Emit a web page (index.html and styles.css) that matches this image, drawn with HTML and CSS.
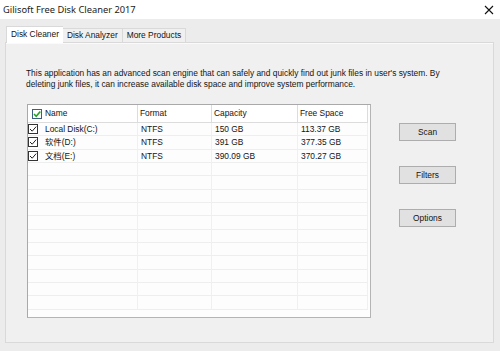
FILE: index.html
```html
<!DOCTYPE html>
<html lang="en">
<head>
    <meta charset="UTF-8">
    <title>Gilisoft Free Disk Cleaner 2017</title>
    <link rel="stylesheet" href="styles.css">
</head>
<body>
    <div class="titlebar">
        <span class="title">Gilisoft Free Disk Cleaner 2017</span>
        <svg class="close" width="10" height="10" viewBox="0 0 10 10">
            <path d="M1 1L9 9M9 1L1 9" stroke="#111" stroke-width="1.1" fill="none"/>
        </svg>
    </div>
    <div class="client">
        <div class="tabs">
            <div class="tab active">Disk Cleaner</div>
            <div class="tab">Disk Analyzer</div>
            <div class="tab">More Products</div>
        </div>
        <div class="panel">
            <p class="intro">This application has an advanced scan engine that can safely and quickly find out junk files in user's system. By deleting junk files, it can increase available disk space and improve system performance.</p>
            <div class="main">
                <div class="list">
                    <div class="list-head">
                        <div class="cell name-cell">
                            <svg class="check head-check" width="10" height="10" viewBox="0 0 10 10">
                                <rect x="0.5" y="0.5" width="9" height="9" fill="#fff" stroke="#3c5f80"/>
                                <path d="M2 5L4.2 7.2L8.3 2.4" stroke="#23a323" stroke-width="1.6" fill="none"/>
                            </svg>
                            Name
                        </div>
                        <div class="cell">Format</div>
                        <div class="cell">Capacity</div>
                        <div class="cell">Free Space</div>
                    </div>
                    <div class="list-body">
                        <div class="row">
                            <div class="cell name-cell">
                                <svg class="check" width="10" height="10" viewBox="0 0 10 10">
                                    <rect x="0.5" y="0.5" width="9" height="9" fill="#fff" stroke="#333"/>
                                    <path d="M2 5L4.2 7.2L8.2 2.6" stroke="#222" stroke-width="1" fill="none"/>
                                </svg>
                                Local Disk(C:)
                            </div>
                            <div class="cell">NTFS</div>
                            <div class="cell">150 GB</div>
                            <div class="cell">113.37 GB</div>
                        </div>
                        <div class="row">
                            <div class="cell name-cell">
                                <svg class="check" width="10" height="10" viewBox="0 0 10 10">
                                    <rect x="0.5" y="0.5" width="9" height="9" fill="#fff" stroke="#333"/>
                                    <path d="M2 5L4.2 7.2L8.2 2.6" stroke="#222" stroke-width="1" fill="none"/>
                                </svg>
                                软件(D:)
                            </div>
                            <div class="cell">NTFS</div>
                            <div class="cell">391 GB</div>
                            <div class="cell">377.35 GB</div>
                        </div>
                        <div class="row">
                            <div class="cell name-cell">
                                <svg class="check" width="10" height="10" viewBox="0 0 10 10">
                                    <rect x="0.5" y="0.5" width="9" height="9" fill="#fff" stroke="#333"/>
                                    <path d="M2 5L4.2 7.2L8.2 2.6" stroke="#222" stroke-width="1" fill="none"/>
                                </svg>
                                文档(E:)
                            </div>
                            <div class="cell">NTFS</div>
                            <div class="cell">390.09 GB</div>
                            <div class="cell">370.27 GB</div>
                        </div>
                        <div class="row"><div class="cell"></div><div class="cell"></div><div class="cell"></div><div class="cell"></div></div>
                        <div class="row"><div class="cell"></div><div class="cell"></div><div class="cell"></div><div class="cell"></div></div>
                        <div class="row"><div class="cell"></div><div class="cell"></div><div class="cell"></div><div class="cell"></div></div>
                        <div class="row"><div class="cell"></div><div class="cell"></div><div class="cell"></div><div class="cell"></div></div>
                        <div class="row"><div class="cell"></div><div class="cell"></div><div class="cell"></div><div class="cell"></div></div>
                        <div class="row"><div class="cell"></div><div class="cell"></div><div class="cell"></div><div class="cell"></div></div>
                        <div class="row"><div class="cell"></div><div class="cell"></div><div class="cell"></div><div class="cell"></div></div>
                        <div class="row"><div class="cell"></div><div class="cell"></div><div class="cell"></div><div class="cell"></div></div>
                        <div class="row"><div class="cell"></div><div class="cell"></div><div class="cell"></div><div class="cell"></div></div>
                        <div class="row"><div class="cell"></div><div class="cell"></div><div class="cell"></div><div class="cell"></div></div>
                        <div class="row"><div class="cell"></div><div class="cell"></div><div class="cell"></div><div class="cell"></div></div>
                    </div>
                </div>
                <div class="actions">
                    <button class="btn">Scan</button>
                    <button class="btn">Filters</button>
                    <button class="btn">Options</button>
                </div>
            </div>
        </div>
    </div>
</body>
</html>
```

FILE: styles.css
```css
*{
    margin: 0;
    padding: 0;
    box-sizing: border-box;
}
body{
    width: 500px;
    height: 351px;
    overflow: hidden;
    background: #ececec;
    font-family: "Liberation Sans", Arial, "Noto Sans CJK SC", sans-serif;
    font-size: 8.4px;
    color: #141414;
}
.titlebar{
    height: 19px;
    background: #fff;
    display: flex;
    align-items: center;
    justify-content: space-between;
    padding: 0 6px 0 3px;
}
.title{
    font-family: "Noto Sans", sans-serif;
    font-size: 9.3px;
    color: #1a1a1a;
}
.client{
    height: 332px;
    padding: 7px 6px 0 5px;
}
.tabs{
    display: flex;
    align-items: flex-end;
    height: 16px;
    margin-left: 1px;
    position: relative;
    z-index: 1;
}
.tab{
    height: 14px;
    padding: 0 4px;
    line-height: 13px;
    border: 1px solid #d9d9d9;
    border-bottom: none;
    background: #f0f0f0;
}
.tab + .tab{
    border-left: none;
}
.tab.active{
    height: 17px;
    margin-bottom: -1px;
    line-height: 15px;
    background: #fff;
    border-right: none;
}
.panel{
    height: 301px;
    border: 1px solid #d9d9d9;
    background: #f0f0f0;
    box-shadow: inset 0 1px #fafafa;
    padding: 25px 20px 0 20px;
}
.intro{
    line-height: 11px;
    width: 430px;
    margin-bottom: 14px;
}
.main{
    display: flex;
    align-items: flex-start;
}
.list{
    width: 344px;
    height: 214px;
    margin-left: 1px;
    border: 1px solid #a9a9a9;
    border-right-color: #b4b4b4;
    border-bottom-color: #b4b4b4;
    background: #fdfdfd;
    overflow: hidden;
    padding-right: 2px;
}
.list-head,
.row{
    display: grid;
    grid-template-columns: 110px 74px 86px 70px;
}
.list-head{
    height: 18px;
    background: #fff;
    border-bottom: 1px solid #dcdcdc;
}
.list-head .cell{
    line-height: 17px;
    border-right: 1px solid #dcdcdc;
    padding-left: 2px;
}
.list-head .name-cell{
    padding-left: 4px;
}
.row{
    height: 13.33px;
}
.row .cell{
    line-height: 12.33px;
    border-right: 1px solid #f0f0f0;
    border-bottom: 1px solid #eeeeee;
    padding-left: 3px;
}
.cell{
    white-space: nowrap;
    display: flex;
    align-items: center;
}
.row .name-cell{
    padding-left: 0;
}
.check{
    flex: none;
    margin-right: 7px;
}
.head-check{
    margin-right: 3px;
}
.actions{
    display: flex;
    flex-direction: column;
    gap: 25px;
    padding-top: 19px;
    margin-left: 28px;
}
.btn{
    width: 57px;
    height: 18px;
    font: inherit;
    color: #141414;
    background: #e1e1e1;
    border: 1px solid #adadad;
}
```
